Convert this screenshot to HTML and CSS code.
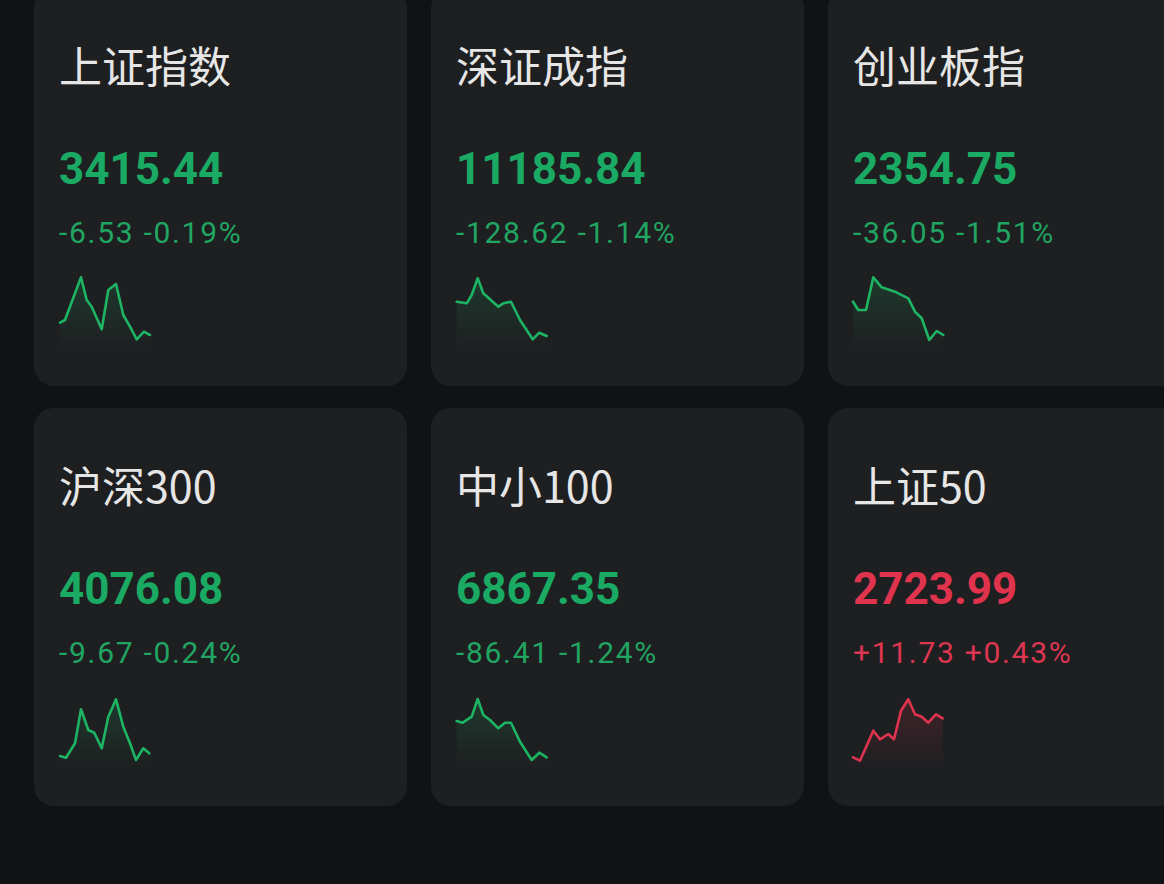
FILE: index.html
```html
<!DOCTYPE html>
<html lang="zh-CN">
<head>
  <meta charset="UTF-8">
  <meta name="viewport" content="width=device-width, initial-scale=1.0">
  <title>指数行情</title>
  <link rel="stylesheet" href="styles.css">
</head>
<body>
  <svg class="defs" width="0" height="0">
    <defs>
      <linearGradient id="fillDown" x1="0" y1="0" x2="0" y2="1">
        <stop offset="0" stop-color="#1db464" stop-opacity="0.18"/>
        <stop offset="1" stop-color="#1db464" stop-opacity="0"/>
      </linearGradient>
      <linearGradient id="fillUp" x1="0" y1="0" x2="0" y2="1">
        <stop offset="0" stop-color="#e0344e" stop-opacity="0.18"/>
        <stop offset="1" stop-color="#e0344e" stop-opacity="0"/>
      </linearGradient>
    </defs>
  </svg>

  <div class="grid">
    <div class="card down">
      <div class="name">上证指数</div>
      <div class="price">3415.44</div>
      <div class="change">-6.53 -0.19%</div>
      <svg class="spark" viewBox="0 0 100 76">
        <polygon class="area" points="1,50.7 6,48 22,5.3 27.7,28 32.7,34.7 42.7,57.3 49.3,18 57,12 64.3,43 71,54.7 77.7,67.3 85,59.7 91,63 91,76 1,76"/>
        <polyline class="line" points="1,50.7 6,48 22,5.3 27.7,28 32.7,34.7 42.7,57.3 49.3,18 57,12 64.3,43 71,54.7 77.7,67.3 85,59.7 91,63"/>
      </svg>
    </div>
    <div class="card down">
      <div class="name">深证成指</div>
      <div class="price">11185.84</div>
      <div class="change">-128.62 -1.14%</div>
      <svg class="spark" viewBox="0 0 100 76">
        <polygon class="area" points="0.7,29.7 10.7,31.3 15.7,23 21.7,6.3 27.3,21.3 34,27.3 42.3,34.7 47.3,31.3 55,29.7 64,48 76.7,67.3 83.3,60.7 90.7,64 90.7,76 0.7,76"/>
        <polyline class="line" points="0.7,29.7 10.7,31.3 15.7,23 21.7,6.3 27.3,21.3 34,27.3 42.3,34.7 47.3,31.3 55,29.7 64,48 76.7,67.3 83.3,60.7 90.7,64"/>
      </svg>
    </div>
    <div class="card down">
      <div class="name">创业板指</div>
      <div class="price">2354.75</div>
      <div class="change">-36.05 -1.51%</div>
      <svg class="spark" viewBox="0 0 100 76">
        <polygon class="area" points="0,29.7 5.3,38 13,38 20.3,5.3 28.7,15.3 42,19.7 55.3,26.3 62,39.7 68.7,46.3 76.3,68 83.7,59 90.3,63 90.3,76 0,76"/>
        <polyline class="line" points="0,29.7 5.3,38 13,38 20.3,5.3 28.7,15.3 42,19.7 55.3,26.3 62,39.7 68.7,46.3 76.3,68 83.7,59 90.3,63"/>
      </svg>
    </div>
    <div class="card down">
      <div class="name">沪深300</div>
      <div class="price">4076.08</div>
      <div class="change">-9.67 -0.24%</div>
      <svg class="spark" viewBox="0 0 100 76">
        <polygon class="area" points="1,64 7,65.7 16,51.3 22,17.3 29.3,38 35.3,40.7 42.7,56.3 49.3,24.7 57,7.3 64.3,34.7 71,51.3 77,68 84.3,56.3 90.3,61.3 90.3,76 1,76"/>
        <polyline class="line" points="1,64 7,65.7 16,51.3 22,17.3 29.3,38 35.3,40.7 42.7,56.3 49.3,24.7 57,7.3 64.3,34.7 71,51.3 77,68 84.3,56.3 90.3,61.3"/>
      </svg>
    </div>
    <div class="card down">
      <div class="name">中小100</div>
      <div class="price">6867.35</div>
      <div class="change">-86.41 -1.24%</div>
      <svg class="spark" viewBox="0 0 100 76">
        <polygon class="area" points="0.7,29 6.7,30.7 15.7,24.7 21.7,7 27.3,23 34,28 42.3,36.3 49,30.7 55,30.7 64,49.7 75.7,68 83.3,60.7 90.7,65.3 90.7,76 0.7,76"/>
        <polyline class="line" points="0.7,29 6.7,30.7 15.7,24.7 21.7,7 27.3,23 34,28 42.3,36.3 49,30.7 55,30.7 64,49.7 75.7,68 83.3,60.7 90.7,65.3"/>
      </svg>
    </div>
    <div class="card up">
      <div class="name">上证50</div>
      <div class="price">2723.99</div>
      <div class="change">+11.73 +0.43%</div>
      <svg class="spark" viewBox="0 0 100 76">
        <polygon class="area" points="0,65.3 7,68.7 20.3,38.7 27,47.3 35.3,42 41,47.3 48,18.7 55.3,7.3 62,22.3 68.7,24.7 75.3,30.7 83,22.3 89.7,26.3 89.7,76 0,76"/>
        <polyline class="line" points="0,65.3 7,68.7 20.3,38.7 27,47.3 35.3,42 41,47.3 48,18.7 55.3,7.3 62,22.3 68.7,24.7 75.3,30.7 83,22.3 89.7,26.3"/>
      </svg>
    </div>
  </div>
</body>
</html>
```

FILE: styles.css
```css
body {
  margin: 0;
  background-color: #111214;
  font-family: Roboto, "Noto Sans CJK SC", sans-serif;
  overflow: hidden;
}
.defs {
  position: absolute;
}
.grid {
  display: grid;
  grid-template-columns: repeat(3, 373px);
  gap: 22px 24px;
  padding-left: 34px;
  margin-top: -12px;
}
.card {
  box-sizing: border-box;
  height: 398px;
  padding: 50px 25px 0;
  background: #1e1f21;
  border-radius: 20px;
}
.name {
  font-family: "Noto Sans CJK SC", sans-serif;
  font-size: 43px;
  line-height: 52px;
  color: #e6e6e6;
}
.price {
  margin-top: 53px;
  font-size: 44px;
  font-weight: 700;
  line-height: 52px;
}
.change {
  margin-top: 20px;
  font-size: 30px;
  line-height: 36px;
  letter-spacing: 1.7px;
}
.spark {
  display: block;
  margin-top: 21px;
  width: 100px;
  height: 76px;
  overflow: visible;
}
.spark .line {
  fill: none;
  stroke-width: 2.6;
  stroke-linejoin: round;
  stroke-linecap: round;
}
.down .price {
  color: #1aaa63;
}
.down .change {
  color: #21a562;
}
.down .line {
  stroke: #1db464;
}
.down .area {
  fill: url(#fillDown);
}
.up .price {
  color: #e0344e;
}
.up .change {
  color: #dc3650;
}
.up .line {
  stroke: #e0344e;
}
.up .area {
  fill: url(#fillUp);
}
```
